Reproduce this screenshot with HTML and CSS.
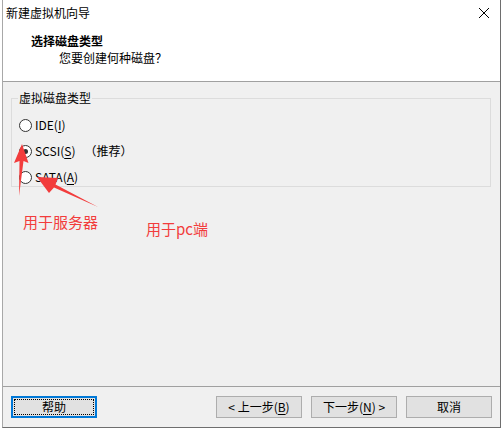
FILE: index.html
```html
<!DOCTYPE html>
<html lang="zh-CN">
<head>
    <meta charset="UTF-8">
    <title>新建虚拟机向导</title>
    <link rel="stylesheet" href="styles.css">
</head>
<body>

<div class="window">
    <div class="header">
        <div class="titlebar">
            <span class="title">新建虚拟机向导</span>
            <svg class="close" width="12" height="12" viewBox="0 0 12 12">
                <path d="M1 1 L11 11 M11 1 L1 11" stroke="#000" stroke-width="1" fill="none"/>
            </svg>
        </div>
        <div class="heading">选择磁盘类型</div>
        <div class="subheading">您要创建何种磁盘？</div>
    </div>

    <div class="content">
        <fieldset class="group">
            <legend>虚拟磁盘类型</legend>
            <label class="option"><span class="radio"></span>IDE(<u>I</u>)</label>
            <label class="option"><span class="radio checked"></span>SCSI(<u>S</u>)<span class="hint">（推荐）</span></label>
            <label class="option"><span class="radio"></span>SATA(<u>A</u>)</label>
        </fieldset>

        <div class="footer">
            <button class="btn btn-focus"><span>帮助</span></button>
            <div class="nav">
                <button class="btn">&lt; 上一步(<u>B</u>)</button>
                <button class="btn">下一步(<u>N</u>) &gt;</button>
                <button class="btn">取消</button>
            </div>
        </div>
    </div>

    <!-- 标注 -->
    <svg class="marks" width="503" height="430" viewBox="0 0 503 430">
        <polygon points="21,144 27.5,163 22.5,161 18,196 18.5,161 13,163" fill="#f23c3c"/>
        <polygon points="36,177 57,178 54.5,184.5 97,207 53,187.5 48,193" fill="#f23c3c"/>
    </svg>
    <span class="note note-server">用于服务器</span>
    <span class="note note-pc">用于pc端</span>
</div>

</body>
</html>
```

FILE: styles.css
```css
/* 向导窗口 */
body {
    margin: 0;
    padding: 0;
    background-color: #ffffff;
    font-family: "Noto Sans CJK SC", "Noto Sans", sans-serif;
    font-size: 12px;
    color: #000;
}
.window {
    position: relative;
    margin-left: 2px;
    width: 497px;
    height: 427px;
    border-left: 1px solid #a8a8a8;
    border-right: 1px solid #6e6e6e;
    border-bottom: 1px solid #6e6e6e;
    display: flex;
    flex-direction: column;
    background-color: #f0f0f0;
}
.header {
    background-color: #ffffff;
    border-bottom: 1px solid #a0a0a0;
    box-sizing: border-box;
    height: 82px;
}
.titlebar {
    display: flex;
    justify-content: space-between;
    align-items: center;
    height: 28px;
    padding: 0 10px 0 3px;
}
.title {
    line-height: 16px;
    margin-top: -2px;
}
.close {
    margin-top: -2px;
}
.heading {
    font-weight: bold;
    margin-left: 28px;
    line-height: 17px;
    margin-top: 4px;
}
.subheading {
    margin-left: 56px;
    line-height: 17px;
}
.content {
    flex: 1;
    display: flex;
    flex-direction: column;
}
.group {
    margin: 9px 9px 0 8px;
    padding: 7px 0 8px 7px;
    border: 1px solid #dcdcdc;
    height: 96px;
    box-sizing: border-box;
}
.group legend {
    padding: 0 1px;
    margin-left: -1px;
    line-height: 14px;
}
.option {
    display: flex;
    align-items: center;
    height: 26px;
    line-height: 16px;
}
.option u {
    text-decoration-thickness: 1px;
    text-underline-offset: 2px;
}
.radio {
    width: 11px;
    height: 11px;
    border: 1px solid #333;
    border-radius: 50%;
    background-color: #fff;
    margin-right: 3px;
    position: relative;
}
.radio.checked::after {
    content: "";
    position: absolute;
    left: 3px;
    top: 3px;
    width: 5px;
    height: 5px;
    border-radius: 50%;
    background-color: #333;
}
.hint {
    margin-left: 9px;
}
.footer {
    margin-top: auto;
    border-top: 1px solid #a0a0a0;
    display: flex;
    justify-content: space-between;
    align-items: flex-start;
    padding: 9px 8px 0 8px;
    height: 41px;
    box-sizing: border-box;
}
.nav {
    display: flex;
    gap: 9px;
}
.btn {
    width: 86px;
    height: 22px;
    padding: 0;
    background-color: #e1e1e1;
    border: 1px solid #adadad;
    font-family: "Noto Sans CJK SC", "Noto Sans", sans-serif;
    font-size: 12px;
    color: #000;
    line-height: 18px;
}
.btn u {
    text-underline-offset: 2px;
}
.btn-focus {
    border: 2px solid #0078d7;
    padding: 1px;
}
.btn-focus span {
    display: block;
    height: 14px;
    line-height: 14px;
    border: 1px dotted #000;
}
.marks {
    position: absolute;
    left: -2px;
    top: 0;
    pointer-events: none;
}
.note {
    position: absolute;
    color: #f23c3c;
    font-size: 15px;
    line-height: 20px;
}
.note-server {
    left: 20px;
    top: 212px;
}
.note-pc {
    left: 143px;
    top: 219px;
}
```
